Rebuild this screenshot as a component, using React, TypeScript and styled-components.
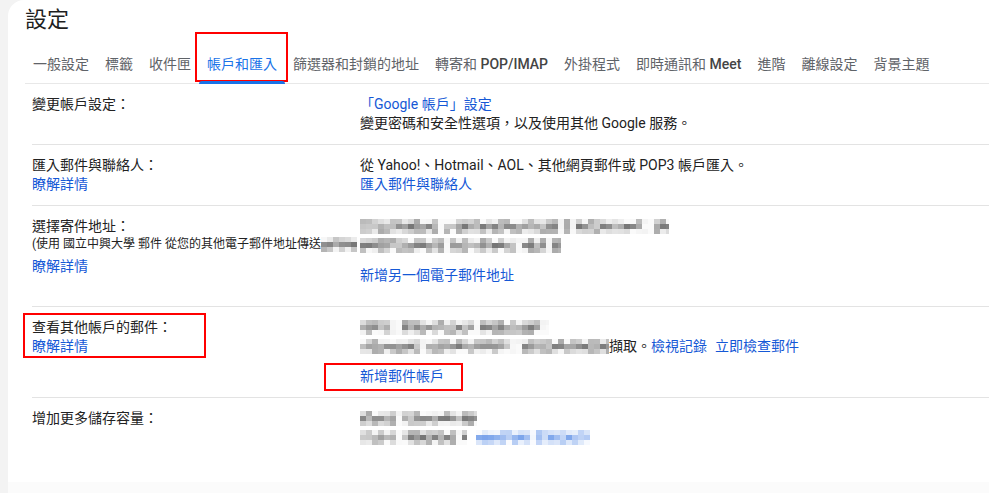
import React from "react";
import styled, { createGlobalStyle, css } from "styled-components";

const GlobalStyle = createGlobalStyle`
  html, body { margin: 0; padding: 0; background: #f3f3f3; }
  body {
    font-family: Roboto, "Noto Sans CJK TC", "Noto Sans", sans-serif;
    font-size: 14px;
    color: #222;
  }
  #root { height: 493px; }
`;

const Page = styled.div`
  display: flex;
  height: 493px;
  overflow: hidden;
`;

const Rail = styled.div`
  flex: none;
  width: 8px;
  background: #f3f3f3;
`;

const Main = styled.div`
  flex: 1;
  min-width: 0;
  display: flex;
  flex-direction: column;
`;

const Card = styled.main`
  flex: 1;
  background: #fff;
  border-top-left-radius: 16px;
  overflow: hidden;
`;

const Footer = styled.div`
  flex: none;
  height: 11px;
  background: #fbfbfb;
`;

const Header = styled.header`
  padding: 9px 0 0 17px;
`;

const Title = styled.h1`
  margin: 0;
  font-size: 22px;
  line-height: 22px;
  font-weight: 400;
  color: #1f1f1f;
`;

const TabBar = styled.nav`
  display: flex;
  margin: 13px 0 0 17px;
  border-bottom: 1px solid #e8e8e8;
`;

const Tab = styled.div<{ $active?: boolean }>`
  position: relative;
  padding: 10px 8px 9px;
  line-height: 20px;
  font-size: 14px;
  white-space: nowrap;
  color: ${(p) => (p.$active ? "#1a73e8" : "#5f6368")};
  ${(p) =>
    p.$active &&
    css`
      &::after {
        content: "";
        position: absolute;
        left: 0;
        right: 0;
        bottom: -1px;
        height: 3px;
        background: #1a73e8;
        border-radius: 3px 3px 0 0;
      }
    `}
`;

const Latin = styled.span`
  font-weight: 500;
  color: #444;
`;

const Frame = styled.span<{ $top: number; $left: number; $w: number; $h: number }>`
  position: absolute;
  top: ${(p) => p.$top}px;
  left: ${(p) => p.$left}px;
  width: ${(p) => p.$w}px;
  height: ${(p) => p.$h}px;
  box-sizing: border-box;
  border: 2px solid #f00;
  pointer-events: none;
`;

const Table = styled.div`
  margin-left: 24px;
`;

const Row = styled.section<{ $first?: boolean }>`
  display: grid;
  grid-template-columns: 328px 1fr;
  padding: 11px 0;
  line-height: 19px;
  border-top: ${(p) => (p.$first ? "none" : "1px solid #e3e3e3")};
`;

const LabelCell = styled.div`
  position: relative;
  min-width: 0;
`;

const Annotated = styled.div`
  position: relative;
`;

const Label = styled.div`
  color: #222;
  white-space: nowrap;
`;

const Note = styled.div`
  font-size: 12px;
  line-height: 16px;
  white-space: nowrap;
  overflow: hidden;
  padding-right: 12px;
  color: #222;
`;

const Link = styled.a<{ $gap?: number }>`
  color: #1558d6;
  text-decoration: none;
  cursor: pointer;
  margin-left: ${(p) => p.$gap ?? 0}px;
`;

const LinkLine = styled.div<{ $top?: number }>`
  margin-top: ${(p) => p.$top ?? 0}px;
`;

const ValueCell = styled.div`
  min-width: 0;
  color: #222;
`;

const Line = styled.div`
  display: flex;
  align-items: center;
  height: 19px;
  white-space: nowrap;
`;

const ActionBlock = styled.div<{ $top: number; $bottom: number }>`
  position: relative;
  display: inline-block;
  margin-top: ${(p) => p.$top}px;
  margin-bottom: ${(p) => p.$bottom}px;
`;

const MosaicSvg = styled.svg<{ $gap?: number }>`
  display: inline-block;
  flex: none;
  vertical-align: middle;
  margin-left: ${(p) => p.$gap ?? 0}px;
`;

function rng(seed: number) {
  let s = seed;
  return () => {
    s = (s * 9301 + 49297) % 233280;
    return s / 233280;
  };
}

function Mosaic({
  width,
  seed,
  blue,
  gap,
  rows = 3,
}: {
  width: number;
  seed: number;
  blue?: boolean;
  gap?: number;
  rows?: number;
}) {
  const cw = 6;
  const ch = 5;
  const cols = Math.ceil(width / cw);
  const r = rng(seed);
  const base = [0.83, 0.63, 0.84];
  const rects: React.ReactNode[] = [];
  for (let c = 0; c < cols; c++) {
    const space = r() < 0.1;
    for (let y = 0; y < rows; y++) {
      let L = space ? 0.95 + r() * 0.04 : base[y % 3] + (r() - 0.5) * 0.34;
      L = Math.max(0.4, Math.min(0.98, L));
      let fill: string;
      if (blue) {
        const t = Math.min(1, (1 - L) * 1.3);
        const rr = Math.round(255 - (255 - 60) * t);
        const gg = Math.round(255 - (255 - 120) * t);
        const bb = Math.round(255 - (255 - 225) * t);
        fill = `rgb(${rr},${gg},${bb})`;
      } else {
        const g = Math.round(255 * L);
        fill = `rgb(${g},${g},${g})`;
      }
      rects.push(
        <rect key={`${c}-${y}`} x={c * cw} y={y * ch} width={cw} height={ch} fill={fill} />
      );
    }
  }
  return (
    <MosaicSvg $gap={gap} width={width} height={rows * ch} viewBox={`0 0 ${width} ${rows * ch}`}>
      {rects}
    </MosaicSvg>
  );
}

const tabs: { label: React.ReactNode; active?: boolean; frame?: boolean }[] = [
  { label: "一般設定" },
  { label: "標籤" },
  { label: "收件匣" },
  { label: "帳戶和匯入", active: true, frame: true },
  { label: "篩選器和封鎖的地址" },
  { label: <>轉寄和 <Latin>POP/IMAP</Latin></> },
  { label: "外掛程式" },
  { label: <>即時通訊和 <Latin>Meet</Latin></> },
  { label: "進階" },
  { label: "離線設定" },
  { label: "背景主題" },
];

export default function App() {
  return (
    <>
      <GlobalStyle />
      <Page>
        <Rail />
        <Main>
          <Card>
            <Header>
              <Title>設定</Title>
            </Header>
            <TabBar>
              {tabs.map((t, i) => (
                <Tab key={i} $active={t.active}>
                  {t.label}
                  {t.frame && <Frame $top={-12} $left={-4} $w={93} $h={50} />}
                </Tab>
              ))}
            </TabBar>
            <Table>
              <Row $first>
                <LabelCell>
                  <Label>變更帳戶設定：</Label>
                </LabelCell>
                <ValueCell>
                  <Line>
                    <Link>「Google 帳戶」設定</Link>
                  </Line>
                  <Line>變更密碼和安全性選項，以及使用其他 Google 服務。</Line>
                </ValueCell>
              </Row>

              <Row>
                <LabelCell>
                  <Label>匯入郵件與聯絡人：</Label>
                  <LinkLine>
                    <Link>瞭解詳情</Link>
                  </LinkLine>
                </LabelCell>
                <ValueCell>
                  <Line>從 Yahoo!、Hotmail、AOL、其他網頁郵件或 POP3 帳戶匯入。</Line>
                  <Line>
                    <Link>匯入郵件與聯絡人</Link>
                  </Line>
                </ValueCell>
              </Row>

              <Row>
                <LabelCell>
                  <Label>選擇寄件地址：</Label>
                  <Note>
                    (使用 國立中興大學 郵件 從您的其他電子郵件地址傳送
                    <Mosaic width={36} seed={11} />
                  </Note>
                  <LinkLine $top={5}>
                    <Link>瞭解詳情</Link>
                  </LinkLine>
                </LabelCell>
                <ValueCell>
                  <Line>
                    <Mosaic width={309} seed={3} />
                  </Line>
                  <Line>
                    <Mosaic width={201} seed={7} />
                  </Line>
                  <ActionBlock $top={11} $bottom={10}>
                    <Link>新增另一個電子郵件地址</Link>
                  </ActionBlock>
                </ValueCell>
              </Row>

              <Row>
                <LabelCell>
                  <Annotated>
                    <Label>查看其他帳戶的郵件：</Label>
                    <LinkLine>
                      <Link>瞭解詳情</Link>
                    </LinkLine>
                    <Frame $top={-5} $left={-9} $w={183} $h={45} />
                  </Annotated>
                </LabelCell>
                <ValueCell>
                  <Line>
                    <Mosaic width={189} seed={19} />
                  </Line>
                  <Line>
                    <Mosaic width={249} seed={23} />
                    擷取。
                    <Link $gap={0}>檢視記錄</Link>
                    <Link $gap={8}>立即檢查郵件</Link>
                  </Line>
                  <ActionBlock $top={11} $bottom={0}>
                    <Link>新增郵件帳戶</Link>
                    <Frame $top={-4} $left={-36} $w={139} $h={28} />
                  </ActionBlock>
                </ValueCell>
              </Row>

              <Row>
                <LabelCell>
                  <Label>增加更多儲存容量：</Label>
                </LabelCell>
                <ValueCell>
                  <Line>
                    <Mosaic width={117} seed={31} />
                  </Line>
                  <Line>
                    <Mosaic width={107} seed={37} />
                    <Mosaic width={114} seed={41} blue gap={9} />
                  </Line>
                </ValueCell>
              </Row>
            </Table>
          </Card>
          <Footer />
        </Main>
      </Page>
    </>
  );
}
